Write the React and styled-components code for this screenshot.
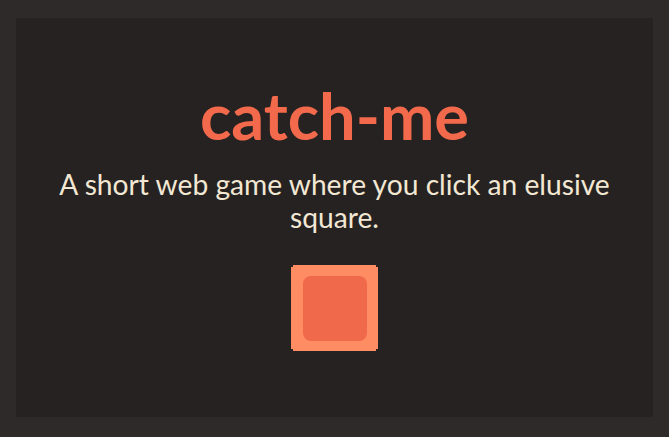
import React from 'react';
import styled, { createGlobalStyle } from 'styled-components';

const GlobalStyle = createGlobalStyle`
  html, body {
    margin: 0;
    padding: 0;
    background: #2f2a2a;
  }
  body {
    font-family: Lato, "Open Sans", sans-serif;
  }
`;

const Frame = styled.div`
  width: 669px;
  height: 437px;
  box-sizing: border-box;
  padding: 18px 16px 20px 16px;
  background: #2f2a2a;
`;

const Stage = styled.main`
  height: 100%;
  background: #272222;
  display: flex;
  flex-direction: column;
  align-items: center;
  padding-top: 58px;
  box-sizing: border-box;
`;

const Title = styled.h1`
  margin: 0;
  font-size: 65px;
  font-weight: 700;
  line-height: 78px;
  color: #f26a4b;
`;

const Tagline = styled.p`
  margin: 14px 0 0;
  width: 580px;
  text-align: center;
  font-size: 28.2px;
  line-height: 33px;
  color: #f3e8d4;
`;

const Square = styled.button`
  margin-top: 31px;
  width: 87px;
  height: 86px;
  padding: 11px 11px 10px 12px;
  border: none;
  background: #ff8c62;
  clip-path: polygon(2px 0, 85px 0, 85px 2px, 87px 2px, 87px 84px, 85px 84px, 85px 86px, 2px 86px, 2px 84px, 0 84px, 0 2px, 2px 2px);
  cursor: pointer;
  box-sizing: border-box;
`;

const Core = styled.span`
  display: block;
  width: 100%;
  height: 100%;
  border-radius: 8px;
  background: #f0694b;
`;

const App = () => (
  <>
    <GlobalStyle />
    <Frame>
      <Stage>
        <Title>catch-me</Title>
        <Tagline>A short web game where you click an elusive square.</Tagline>
        <Square aria-label="square">
          <Core />
        </Square>
      </Stage>
    </Frame>
  </>
);

export default App;
